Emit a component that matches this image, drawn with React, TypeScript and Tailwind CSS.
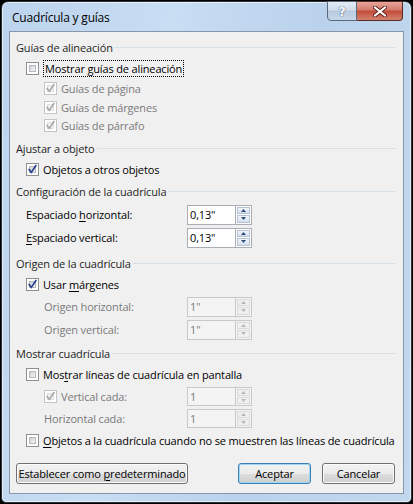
import React from 'react';

const font = { fontFamily: '"Open Sans", "Noto Sans", sans-serif' };

type CheckProps = { checked?: boolean; disabled?: boolean };

// Win7-style checkbox, 13x13
const Check: React.FC<CheckProps> = ({ checked, disabled }) => (
  <span
    className={`relative inline-block w-[13px] h-[13px] shrink-0 border bg-white ${
      disabled ? 'border-[#c4c4c4]' : 'border-[#8e8f8f]'
    }`}
  >
    <span
      className={`absolute inset-[2px] border ${
        disabled
          ? 'border-[#dedede] bg-[#f2f2f2]'
          : 'border-[#b4b8be] bg-gradient-to-br from-[#cdd0d4] to-[#f7f7f7]'
      }`}
    />
    {checked && (
      <svg className="absolute -left-[1px] -top-[1px]" width="13" height="13" viewBox="0 0 13 13">
        <path
          d="M3.2 6.6 L5.3 9.4 L9.8 2.8"
          fill="none"
          stroke={disabled ? '#a9a9a9' : '#2a3f8f'}
          strokeWidth="1.7"
          strokeLinecap="square"
        />
      </svg>
    )}
  </span>
);

const Header: React.FC<{ text: string }> = ({ text }) => (
  <div className="h-[20px] flex items-center pl-[6px] pr-[7px]">
    <span className="text-[#1e1e1e]">{text}</span>
    <div className="flex-1 h-px bg-[#d5dfe5] ml-[2px]" />
  </div>
);

const Spin: React.FC<{ value: string; disabled?: boolean; h: string }> = ({ value, disabled, h }) => (
  <div className={`flex w-[65px] ${h}`}>
    <div
      className={`flex-1 flex items-center pl-[2px] border ${
        disabled ? 'border-[#c9c9c9] bg-[#f4f4f4] text-[#7a7a7a]' : 'border-[#abadb3] bg-white text-black'
      }`}
    >
      {value}
    </div>
    <div className={`w-[16px] flex flex-col border border-l-0 p-[1px] gap-[1px] ${disabled ? 'border-[#c9c9c9] bg-[#f4f4f4]' : 'border-[#abadb3] bg-white'}`}>
      {['up', 'down'].map((d) => (
        <div
          key={d}
          className={`flex-1 flex items-center justify-center border ${
            disabled
              ? 'border-[#dadada] bg-[#f0f0f0]'
              : 'border-[#b5c2d1] bg-gradient-to-b from-[#f2f6fb] to-[#d4e0ee]'
          }`}
        >
          <svg width="5" height="3" viewBox="0 0 5 3">
            <path d={d === 'up' ? 'M0 3 L2.5 0 L5 3 Z' : 'M0 0 L2.5 3 L5 0 Z'} fill={disabled ? '#b8b8b8' : '#2f4a7a'} />
          </svg>
        </div>
      ))}
    </div>
  </div>
);

const U: React.FC<{ children: React.ReactNode }> = ({ children }) => <span className="underline underline-offset-2">{children}</span>;

const Btn: React.FC<{ children: React.ReactNode; w: string; def?: boolean }> = ({ children, w, def }) => (
  <div
    className={`${w} h-[21px] rounded-[3px] border flex items-center justify-center ${
      def
        ? 'border-[#3c7fb1] shadow-[inset_0_0_0_1px_#9fd5f7]'
        : 'border-[#707070] shadow-[inset_0_0_0_1px_#fcfcfc]'
    } bg-[linear-gradient(#f2f2f2_0%,#ebebeb_50%,#dddddd_51%,#cfcfcf_100%)]`}
  >
    <span>{children}</span>
  </div>
);

export default function App() {
  return (
    <div className="w-[413px] h-[504px] bg-black p-[1px] text-[11px] tracking-[-0.15px] leading-none text-black whitespace-nowrap" style={font}>
      <div className="h-full flex flex-col rounded-t-[7px] rounded-b-[5px] border border-[#2d3237] bg-[linear-gradient(100deg,#bcd4ee_0%,#c9ddf3_35%,#bad2ec_65%,#c3d8ef_100%)] shadow-[inset_0_0_0_1px_rgba(255,255,255,0.55)]">
        {/* title bar */}
        <div className="h-[29px] flex items-start">
          <div className="pl-[10px] pt-[10px] text-[12px] tracking-[-0.2px] text-black">Cuadrícula y guías</div>
          <div className="ml-auto mr-[8px] flex">
            <div className="w-[30px] h-[20px] -mt-[1px] rounded-bl-[4px] border border-[#5a6a7c] bg-[linear-gradient(#e4ecf6_0%,#cfdcec_45%,#b7c9de_50%,#c8d8ea_100%)] flex items-center justify-center">
              <span className="text-[13px] font-bold text-white [text-shadow:0_0_1px_#3d4f66,0_0_1px_#3d4f66]" style={{ fontFamily: '"DejaVu Sans", sans-serif' }}>?</span>
            </div>
            <div className="w-[46px] h-[20px] -mt-[1px] rounded-br-[4px] border border-l-0 border-[#5a2a24] bg-[linear-gradient(#e6a59a_0%,#d4786a_45%,#c24a36_50%,#d2826f_100%)] flex items-center justify-center">
              <svg width="14" height="11" viewBox="0 0 14 11">
                <path d="M2 1.5 L12 9.5 M12 1.5 L2 9.5" stroke="#5a2520" strokeWidth="4" strokeLinecap="round" />
                <path d="M2 1.5 L12 9.5 M12 1.5 L2 9.5" stroke="#ffffff" strokeWidth="2.2" strokeLinecap="round" />
              </svg>
            </div>
          </div>
        </div>

        {/* client area */}
        <div className="flex-1 mx-[7px] border border-[#8796a8] bg-[#f0f0f0] pt-[5px] flex flex-col">
          <Header text="Guías de alineación" />
          <div className="h-[22px] flex items-center pl-[16px] gap-[4px]">
            <Check />
            <span className="border border-dotted border-black px-[1px] py-[2px]">Mostrar guías de alineación</span>
          </div>
          <div className="h-[19px] flex items-center pl-[34px] gap-[4px] text-[#7a7a7a]">
            <Check checked disabled />
            <span>Guías de página</span>
          </div>
          <div className="h-[18px] flex items-center pl-[34px] gap-[4px] text-[#7a7a7a]">
            <Check checked disabled />
            <span>Guías de márgenes</span>
          </div>
          <div className="h-[18px] flex items-center pl-[34px] gap-[4px] text-[#7a7a7a]">
            <Check checked disabled />
            <span>Guías de párrafo</span>
          </div>

          <div className="mt-[4px]">
            <Header text="Ajustar a objeto" />
          </div>
          <div className="h-[22px] flex items-center pl-[16px] gap-[4px]">
            <Check checked />
            <span>Objetos a otros objetos</span>
          </div>

          <div className="mt-[1px]">
            <Header text="Configuración de la cuadrícula" />
          </div>
          <div className="mt-[2px] h-[23px] flex items-center">
            <div className="w-[177px] pl-[16px]">
              Espaciado <U>h</U>orizontal:
            </div>
            <Spin value={'0,13"'} h="h-[20px]" />
          </div>
          <div className="h-[23px] flex items-center">
            <div className="w-[177px] pl-[16px]">
              <U>E</U>spaciado vertical:
            </div>
            <Spin value={'0,13"'} h="h-[20px]" />
          </div>

          <div className="mt-[4px]">
            <Header text="Origen de la cuadrícula" />
          </div>
          <div className="h-[22px] flex items-center pl-[16px] gap-[4px]">
            <Check checked />
            <span>
              Usar <U>m</U>árgenes
            </span>
          </div>
          <div className="h-[23px] flex items-center text-[#7a7a7a]">
            <div className="w-[177px] pl-[34px]">Origen horizontal:</div>
            <Spin value={'1"'} disabled h="h-[20px]" />
          </div>
          <div className="h-[23px] flex items-center text-[#7a7a7a]">
            <div className="w-[177px] pl-[34px]">Origen vertical:</div>
            <Spin value={'1"'} disabled h="h-[20px]" />
          </div>

          <div className="mt-[2px]">
            <Header text="Mostrar cuadrícula" />
          </div>
          <div className="h-[22px] flex items-center pl-[16px] gap-[4px]">
            <Check />
            <span>
              Mos<U>t</U>rar líneas de cuadrícula en pantalla
            </span>
          </div>
          <div className="h-[22px] flex items-center text-[#7a7a7a]">
            <div className="w-[177px] pl-[34px] flex items-center gap-[4px]">
              <Check checked disabled />
              <span>Vertical cada:</span>
            </div>
            <Spin value="1" disabled h="h-[19px]" />
          </div>
          <div className="h-[22px] flex items-center text-[#7a7a7a]">
            <div className="w-[177px] pl-[34px]">Horizontal cada:</div>
            <Spin value="1" disabled h="h-[19px]" />
          </div>
          <div className="h-[22px] flex items-center pl-[16px] gap-[4px]">
            <Check />
            <span>
              <U>O</U>bjetos a la cuadrícula cuando no se muestren las líneas de cuadrícula
            </span>
          </div>

          <div className="mt-[12px] flex items-center pl-[6px] pr-[8px]">
            <Btn w="w-[172px]">
              Establecer como <U>p</U>redeterminado
            </Btn>
            <div className="ml-auto flex gap-[11px]">
              <Btn w="w-[73px]" def>
                Aceptar
              </Btn>
              <Btn w="w-[73px]">Cancelar</Btn>
            </div>
          </div>
        </div>
        <div className="h-[8px]" />
      </div>
    </div>
  );
}
